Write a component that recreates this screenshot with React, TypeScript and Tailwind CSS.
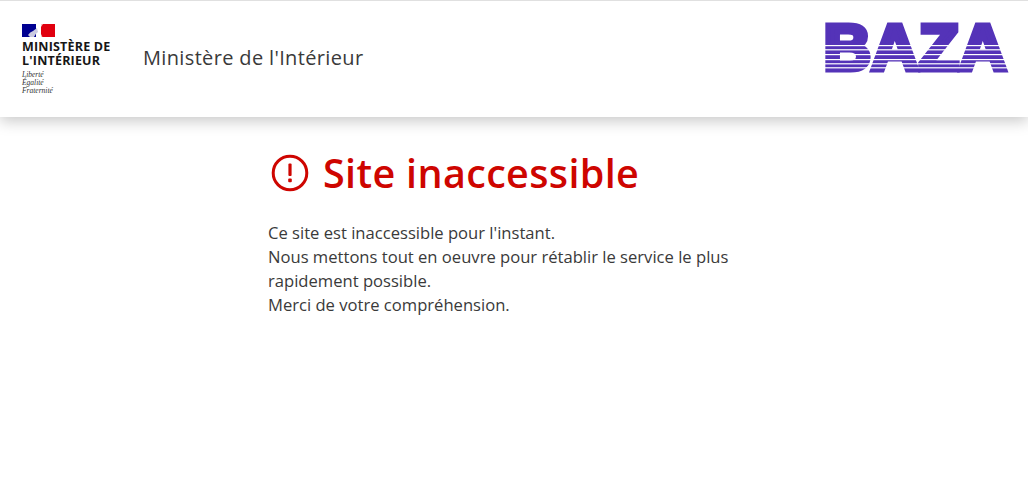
const sans = "font-['Open_Sans','Noto_Sans',sans-serif]";

// drapeau de la République, simplifié
function Flag() {
  return (
    <svg viewBox="0 0 33 13" className="block h-[13px] w-[33px]">
      <rect width="14" height="13" fill="#000091" />
      <rect x="14" width="5" height="13" fill="#ffffff" />
      <rect x="19" width="14" height="13" fill="#e1000f" />
      <path d="M6 11 Q8 8 11 7 L15 4 L16 8 Q13 10 12 13 L8 13 Z" fill="#c9c9e0" />
      <path d="M19 0 L21 0 L19 3 Z M19 13 L19 10 L20.5 13 Z" fill="#f7c4c4" />
    </svg>
  );
}

function BazaLogo() {
  const stripes = [23, 27.2, 32, 37, 41.2, 45.2];
  return (
    <svg viewBox="0 0 186 52" className="block h-[52px] w-[186px] overflow-visible">
      <text
        x="1.5"
        y="48"
        textLength="183"
        lengthAdjust="spacingAndGlyphs"
        fontFamily="'Liberation Sans', sans-serif"
        fontWeight="700"
        fontSize="64"
        fill="#5433b8"
        stroke="#5433b8"
        strokeWidth="5"
      >
        BAZA
      </text>
      {stripes.map((y) => (
        <rect key={y} x="0" y={y} width="186" height="1.2" fill="#ffffff" />
      ))}
    </svg>
  );
}

function AlertIcon() {
  return (
    <svg viewBox="0 0 38 38" className="block h-[38px] w-[38px]" fill="none">
      <circle cx="19" cy="19" r="16.8" stroke="#ce0500" strokeWidth="3" />
      <rect x="17.4" y="9.5" width="3.2" height="12.5" rx="1" fill="#ce0500" />
      <rect x="17.2" y="24.5" width="3.6" height="3.8" rx="1" fill="#ce0500" />
    </svg>
  );
}

export default function App() {
  return (
    <div className={`min-h-[488px] w-full bg-white ${sans}`}>
      <header className="flex h-[117px] items-center justify-between border-t border-[#e0e0e0] bg-white pl-[22px] pr-[19px] shadow-[0_4px_14px_rgba(0,0,0,0.22)]">
        <div className="flex items-center">
          <div className="flex w-[121px] flex-col">
            <Flag />
            <p className="mt-[3px] text-[12.5px] font-bold leading-[14px] tracking-[0.2px] text-[#161616]">
              MINISTÈRE DE
              <br />
              L'INTÉRIEUR
            </p>
            <p className="mt-[3px] font-['Liberation_Serif',serif] text-[7.5px] italic leading-[8px] text-[#333333]">
              Liberté
              <br />
              Égalité
              <br />
              Fraternité
            </p>
          </div>
          <span className="pb-[2px] text-[20px] font-medium tracking-[0.35px] text-[#3a3a3a]">Ministère de l'Intérieur</span>
        </div>
        <div className="mb-[22px] mr-[1px]">
          <BazaLogo />
        </div>
      </header>
      <main className="ml-[268px] w-[480px] pt-[33px]">
        <div className="flex items-center gap-[14px] pl-[3px]">
          <AlertIcon />
          <h1 className="text-[39.5px] font-semibold leading-[46px] tracking-[0.35px] text-[#ce0500]">Site inaccessible</h1>
        </div>
        <p className="mt-[25px] text-[16.6px] leading-[24px] text-[#3a3a3a]">
          Ce site est inaccessible pour l'instant.
          <br />
          Nous mettons tout en oeuvre pour rétablir le service le plus rapidement possible.
          <br />
          Merci de votre compréhension.
        </p>
      </main>
    </div>
  );
}
